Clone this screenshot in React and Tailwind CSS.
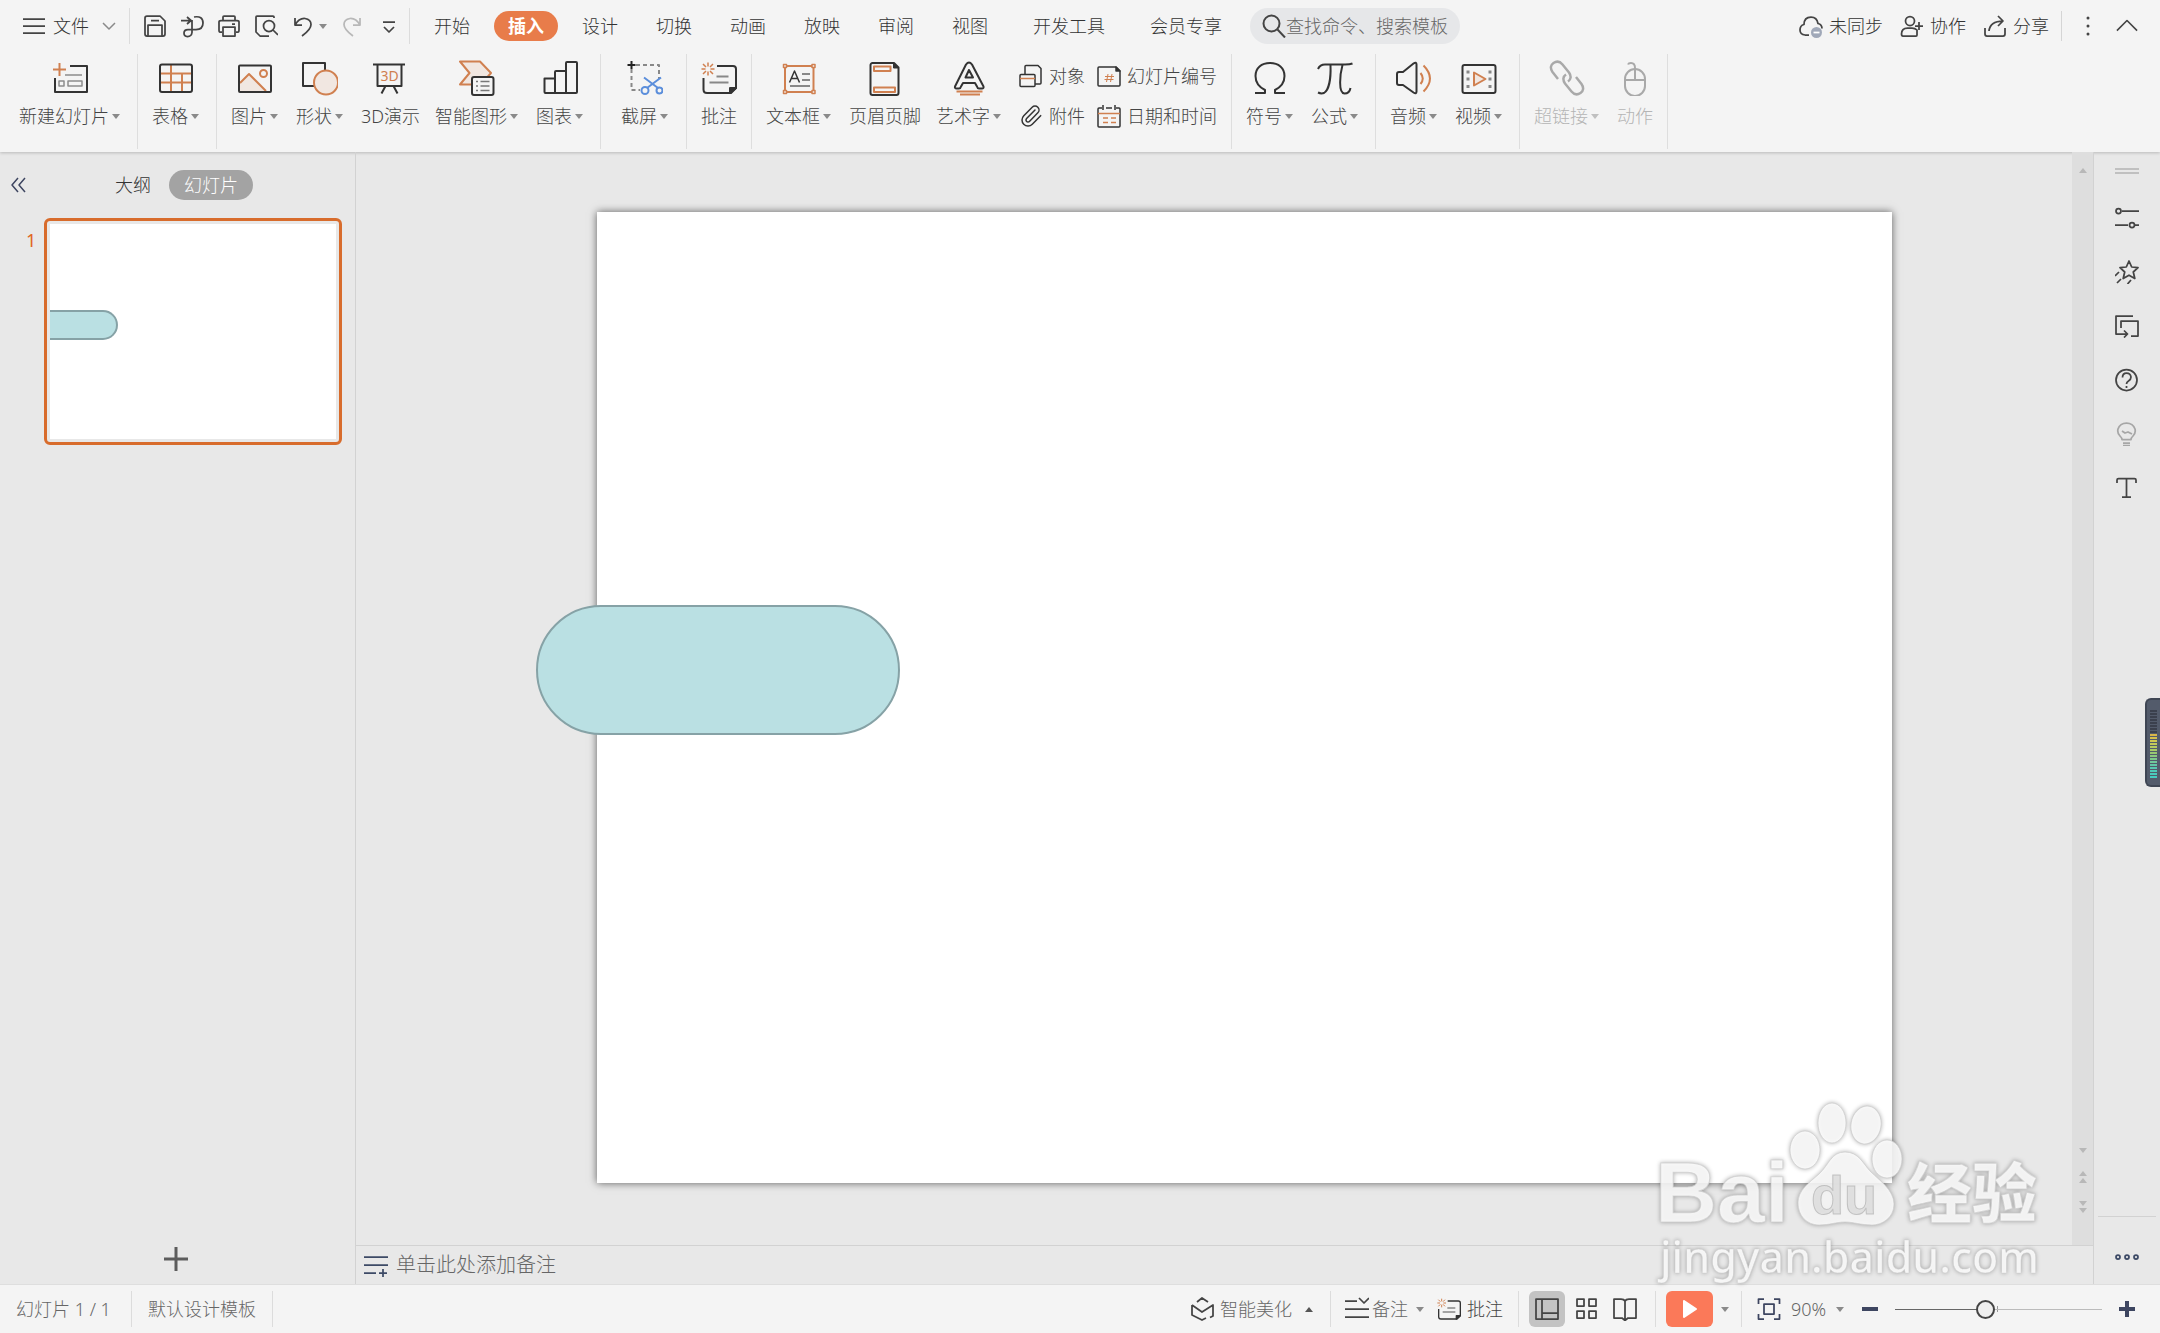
import { useState } from 'react'
import { Paperclip } from 'lucide-react'

const ORANGE = '#d08050'
const INK = '#333333'
const PALE = '#f1e7e1'

function Icon({ box = 24, className = 'w-6 h-6', stroke = '#444444', sw = 1.75, children }) {
  return (
    <svg
      viewBox={`0 0 ${box} ${box}`}
      className={`block flex-shrink-0 ${className}`}
      fill="none"
      stroke={stroke}
      strokeWidth={sw}
      strokeLinejoin="round"
      aria-hidden="true"
    >
      {children}
    </svg>
  )
}

function Caret({ up = false, color = '#8a8a8a' }) {
  return (
    <svg viewBox="0 0 8 5" className="block w-2 h-[5px] flex-shrink-0" aria-hidden="true">
      <path d={up ? 'M0 5h8L4 0z' : 'M0 0h8L4 5z'} fill={color} />
    </svg>
  )
}

// Ribbon icons are drawn on a 36 x 36 grid
const big = {
  newSlide: (
    <>
      <path d="M18 6h17v26H3V18" stroke={INK} />
      <path d="M7.500 3v13M1 9.500h13" stroke={ORANGE} />
      <path d="M13 15h17M7 21h5v5H7zM16 21h14v5H16z" stroke="#8c8c8c" strokeWidth="1.500" />
    </>
  ),
  table: (
    <>
      <path d="M2 13.500h32M2 22.500h32M13 5v27M24 13.500V32" stroke={ORANGE} />
      <rect x="2" y="4.500" width="32" height="27.500" rx="2" stroke={INK} />
    </>
  ),
  picture: (
    <>
      <path d="M3 23l9-9 17 17H3z" fill={PALE} stroke="none" />
      <path d="M3 23l9-9 17 17" stroke={ORANGE} />
      <circle cx="26.500" cy="13.500" r="3.500" stroke={ORANGE} />
      <rect x="2" y="5.500" width="32" height="26.500" rx="1" stroke={INK} />
    </>
  ),
  shape: (
    <>
      <path d="M12 26H1V3h22v8" stroke={INK} />
      <circle cx="24" cy="22.500" r="12" fill={PALE} stroke={ORANGE} />
    </>
  ),
  demo3d: (
    <>
      <path d="M0 4.500h32M4.500 5v21h24V5M12.500 26l-4 7.500M20.500 26l4 7.500" stroke={INK} />
      <text x="16.500" y="20.500" textAnchor="middle" fontSize="14" fontWeight="400" fontFamily="Noto Sans, sans-serif" fill={ORANGE} stroke="none">3D</text>
    </>
  ),
  smart: (
    <>
      <path d="M1 1.500h20l11 11.500-10 11.500H1L10.500 13z" fill={PALE} stroke={ORANGE} />
      <rect x="13" y="17" width="21.500" height="18" rx="2" fill="#f4f4f4" stroke={INK} />
      <path d="M17 21.500h2M17 26h2M17 30.500h2M21.500 21.500h9M21.500 26h9M21.500 30.500h9" stroke="#777" strokeWidth="1.500" />
    </>
  ),
  chart: (
    <path d="M2.500 18.500H13V33H3.500a1 1 0 0 1-1-1zM13 33V12a1 1 0 0 1 1-1h10v22zM24 33V3a1 1 0 0 1 1-1h9a1 1 0 0 1 1 1v29a1 1 0 0 1-1 1z" stroke={INK} />
  ),
  screenshot: (
    <>
      <path d="M9 5h23v14M4.500 9v21H13" stroke="#888" strokeDasharray="4 3" />
      <path d="M4.500 1v8M.5 5h8" stroke="#222" />
      <path d="M34 17.500L20 28M17 17.500L31 28" stroke="#5b8edb" />
      <circle cx="18" cy="30.500" r="3.500" stroke="#5b8edb" />
      <circle cx="32.500" cy="30.500" r="3" stroke="#5b8edb" />
    </>
  ),
  comment: (
    <>
      <path d="M16 6h16q3 0 3 3v19l-5 5H6q-3.500 0-3.500-3.500V18" stroke={INK} />
      <path d="M29 33v-5h6z" fill={INK} stroke={INK} />
      <path d="M15.500 16.500h12M8.500 22.500h19" stroke="#888" />
      <path d="M7 2.500v4M7 11.500v4M.5 9h4M9.500 9h4M2 4l3 3M9 11l3 3M12 4L9 7M5 11l-3 3" stroke={ORANGE} strokeWidth="1.500" />
    </>
  ),
  textbox: (
    <>
      <rect x="4" y="6" width="28.500" height="26" stroke={ORANGE} />
      <path d="M2.500 4.500h3v3h-3zM31 4.500h3v3h-3zM2.500 30.500h3v3h-3zM31 30.500h3v3h-3z" fill="#f4f4f4" stroke={ORANGE} strokeWidth="1.500" />
      <path d="M8.500 22.500L13.500 11l5 11.500M10 18.500h7" stroke={INK} strokeWidth="1.500" />
      <path d="M21 14h8M21 20h8M9 26h20" stroke="#888" />
    </>
  ),
  header: (
    <>
      <path d="M5.500 3H27l4.500 4.500V33a2 2 0 0 1-2 2h-24a2 2 0 0 1-2-2V5a2 2 0 0 1 2-2z" stroke={INK} />
      <path d="M26.500 3v5h5z" fill={INK} stroke={INK} strokeWidth="1" />
      <path d="M7 6.500h16.500v4.500H7zM7 27.500h21V32H7z" stroke={ORANGE} />
    </>
  ),
  wordart: (
    <>
      <path d="M4 26.500L15 4.500q3-4 6 0L32.500 26.500q.5 2-1.500 2h-3q-1.500 0-2-2l-2-3.500H12l-2 3.500q-.5 2-2 2H5.500q-2 0-1.500-2zM14.500 17.500h7.500L18 10z" stroke={INK} />
      <path d="M5.500 31.500h26M9 34.500h20" stroke={ORANGE} />
    </>
  ),
  omega: (
    <path d="M3 33h10v-3C7 27 3.500 22 3.500 16 3.500 8 9.500 3 18 3s14.500 5 14.500 13c0 6-3.500 11-9.500 14v3h10" stroke={INK} />
  ),
  pi: (
    <path d="M1 9q2-4.500 7-4.500h20q5 0 7.500-1M13.500 5C14 18 12 30 7 33q-3 1-6-.5M25.500 5C23 14 21 33 27.500 33.500q5 0 6-5.500" stroke={INK} />
  ),
  audio: (
    <>
      <path d="M1 14q0-2 2-2h4L17.500 3.500q3-2 3 1v27q0 3-3 1L7 25H3q-2 0-2-2z" stroke={INK} />
      <path d="M24.500 13q4.500 5.500 0 11M27.500 5.500q13 13 0 26" stroke={ORANGE} />
    </>
  ),
  video: (
    <>
      <rect x="1.500" y="5" width="33" height="28" rx="2" stroke={INK} />
      <path d="M13 12.500v13L24.500 19z" fill={PALE} stroke={ORANGE} />
      <path d="M7 10.500v3M7 17.500v3M7 25v3M29 10.500v3M29 17.500v3M29 25v3" stroke="#888" strokeWidth="3" />
    </>
  ),
  link: (
    <g strokeWidth="2.500">
      <path d="M9 19L3.500 12C1 8.500 1.500 5 4.500 3s6.500-1.500 9 1.500l6.500 8c2.500 3.500 2 7-1 9" stroke="#a9a9a9" />
      <path d="M27 17l5.500 7c2.500 3.500 2 7-1 9s-6.500 1.500-9-1.500l-6.500-8c-2.500-3.500-2-7 1-9" stroke="#a9a9a9" />
    </g>
  ),
  mouse: (
    <>
      <rect x="8" y="9" width="20" height="27" rx="10" stroke="#a9a9a9" />
      <path d="M8 20h20M18 20V8q0-5-4-5-2.500 0-3 1.500" stroke="#a9a9a9" />
    </>
  ),
}

const groups = [
  { pad: 'pl-3 pr-[7px]', items: [{ icon: 'newSlide', label: '新建幻灯片', menu: true }] },
  { items: [{ icon: 'table', label: '表格', menu: true }] },
  {
    items: [
      { icon: 'picture', label: '图片', menu: true },
      { icon: 'shape', label: '形状', menu: true },
      { icon: 'demo3d', label: '3D演示' },
      { icon: 'smart', label: '智能图形', menu: true },
      { icon: 'chart', label: '图表', menu: true },
    ],
  },
  { pad: 'pl-[13px] pr-2', items: [{ icon: 'screenshot', label: '截屏', menu: true }] },
  { items: [{ icon: 'comment', label: '批注' }] },
  {
    items: [
      { icon: 'textbox', label: '文本框', menu: true },
      { icon: 'header', label: '页眉页脚' },
      { icon: 'wordart', label: '艺术字', menu: true },
    ],
    small: true,
  },
  {
    items: [
      { icon: 'omega', label: '符号', menu: true },
      { icon: 'pi', label: '公式', menu: true },
    ],
  },
  {
    items: [
      { icon: 'audio', label: '音频', menu: true },
      { icon: 'video', label: '视频', menu: true },
    ],
  },
  {
    items: [
      { icon: 'link', label: '超链接', menu: true, disabled: true },
      { icon: 'mouse', label: '动作', disabled: true },
    ],
  },
]

const smallItems = [
  {
    label: '对象',
    icon: (
      <Icon stroke={INK} sw={1.5}>
        <path d="M6 10V2.500q0-1 1-1h12l3 3V19q0 1-1 1h-5" />
        <rect x="1" y="10.500" width="15" height="12" rx="1" />
        <path d="M1 14.500h15" stroke={ORANGE} />
      </Icon>
    ),
  },
  {
    label: '幻灯片编号',
    icon: (
      <Icon stroke={INK} sw={1.5}>
        <path d="M2 3h17l4 4v14q0 1-1 1H2q-1 0-1-1V4q0-1 1-1z" />
        <path d="M19 3v4h4z" fill={INK} />
        <path d="M11 10l-1.500 8M15 10l-1.500 8M8 12.500h9M7.500 15.500h9" stroke={ORANGE} strokeWidth="1" />
      </Icon>
    ),
  },
  {
    label: '附件',
    icon: <Paperclip size={24} strokeWidth={1.5} color={INK} aria-hidden="true" />,
  },
  {
    label: '日期和时间',
    icon: (
      <Icon stroke={INK} sw={1.5}>
        <path d="M5 4H2q-1 0-1 1v17q0 1 1 1h20q1 0 1-1V5q0-1-1-1h-3M9 4h6M6 1v5M18 1v5" />
        <path d="M1 9.500h22M6 14h5M14 14h5M6 18.500h5M14 18.500h5" stroke={ORANGE} />
      </Icon>
    ),
  },
]

const quick = [
  {
    label: '保存',
    icon: (
      <>
        <path d="M4 2h13l5 5v13q0 2-2 2H4q-2 0-2-2V4q0-2 2-2z" />
        <path d="M5 22V11h14v11M8 6.500h8" />
      </>
    ),
  },
  {
    label: '输出为PDF',
    icon: <path d="M1 6.500h10M7 3l4 3.500L7 10M14 3q9-1.500 9 6 0 6.500-7 6.500H8q-4 0-4 3.500t3.500 3.500q4 0 4.500-4V6" />,
  },
  {
    label: '打印',
    icon: (
      <>
        <path d="M6 7V3q0-1 1-1h10q1 0 1 1v4M5 18H3q-1 0-1-2V8q0-1.500 2-1.500h16q2 0 2 1.500v8q0 2-1 2h-2M15 10h3" />
        <path d="M6 13h12v9H6z" />
      </>
    ),
  },
  {
    label: '打印预览',
    icon: (
      <>
        <path d="M20 4V3q0-1-1-1H3q-1 0-1 1v15l4 4h9" />
        <circle cx="15" cy="12" r="5.500" />
        <path d="M19 16l5 5" />
      </>
    ),
  },
]

const sideIcons = [
  {
    label: '属性',
    icon: (
      <>
        <circle cx="3.500" cy="5" r="2.500" />
        <path d="M7 5h17M0 19h13M20 19h4" />
        <circle cx="17" cy="19" r="2.500" />
      </>
    ),
  },
  {
    label: '动画',
    icon: (
      <>
        <path d="M14 1l2.700 6 6.300.6-4.700 4.400 1.500 6.500-5.800-3.300-5.800 3.300 1.500-6.500L5 7.600l6.300-.6z" />
        <path d="M4 12l-4 4M6 19l-4 4M16 20l-3.500 4" />
      </>
    ),
  },
  {
    label: '切换',
    icon: <path d="M18 2H1v18h11M9 16.500l3.500 3.500L9 23.500M6 14V7h17v15h-7" />,
  },
  {
    label: '帮助',
    icon: (
      <>
        <circle cx="11.500" cy="12" r="10.500" />
        <path d="M7.500 9.500q0-4.500 4-4.500t4.500 4q0 2.500-2.500 4-2 1.300-2 3M11.500 18v2" />
      </>
    ),
  },
  {
    label: '提示',
    color: '#a6a6a6',
    icon: (
      <>
        <path d="M7 17.500q0-1.500-2-3.500-3-3-2-7Q5 1 11.500 1T20 7q1 4-2 7-2 2-2 3.500zM8 21h7M8 23.500h7" />
        <path d="M7 9l3 2 3-1 4 2" />
      </>
    ),
  },
  {
    label: '文字',
    icon: <path d="M2 7V4q0-1.500 1.500-1.500h16Q21 2.500 21 4v3M11.500 3v18M7 21h9" />,
  },
]

const tabs = ['开始', '插入', '设计', '切换', '动画', '放映', '审阅', '视图', '开发工具', '会员专享']

function TopBar() {
  const [active, setActive] = useState('插入')
  return (
    <div className="flex items-center h-[52px] pl-[22px] pr-[22px] text-[#333]">
      <button className="flex items-center">
        <Icon><path d="M1 5h22M1 12h22M1 19h22" /></Icon>
        <span className="ml-[7px]">文件</span>
        <Icon className="w-[14px] h-[14px] ml-[13px]" box={14} stroke="#8a8a8a" sw={1.5}><path d="M1 4l6 6 6-6" /></Icon>
      </button>
      <div className="w-px h-9 ml-[13px] mr-[13px] bg-[#dcdcdc]" />

      <div className="flex items-center gap-[13px]">
        {quick.map((q) => (
          <button key={q.label} aria-label={q.label}><Icon>{q.icon}</Icon></button>
        ))}
        <button aria-label="撤销" className="flex items-center gap-1">
          <Icon><path d="M4 4v7h7M4 11Q8 4 14 4.500q6 1 6 6T11 22" /></Icon>
          <Caret />
        </button>
        <button aria-label="恢复" disabled>
          <Icon stroke="#b8b8b8"><path d="M20 4v7h-7M20 11Q16 4 10 4.500q-6 1-6 6T13 22" /></Icon>
        </button>
        <button aria-label="自定义快速访问工具栏">
          <Icon><path d="M6 8h12M7 13l5 5 5-5" /></Icon>
        </button>
      </div>
      <div className="w-px h-9 ml-2 mr-[10px] bg-[#dcdcdc]" />

      <nav className="flex items-center gap-[10px]">
        {tabs.map((t) => (
          <button
            key={t}
            onClick={() => setActive(t)}
            className={`h-[30px] px-[14px] rounded-full ${t.length > 2 ? 'ml-[7px]' : ''} ${
              t === active ? 'bg-[#e87c4a] text-white font-bold' : ''
            }`}
          >
            {t}
          </button>
        ))}
      </nav>

      <label className="flex items-center h-9 w-[210px] ml-[14px] pl-3 rounded-full bg-[#e6e7e9]">
        <Icon stroke="#444" sw={2}><circle cx="9.500" cy="9.500" r="8" /><path d="M15.500 15.500l7.500 8" /></Icon>
        <input
          aria-label="搜索"
          placeholder="查找命令、搜索模板"
          className="w-[166px] bg-transparent outline-none placeholder:text-[#666]"
        />
      </label>

      <div className="flex items-center ml-auto gap-[17px]">
        <button className="flex items-center gap-[6px]">
          <Icon>
            <path d="M10 21H6q-5-.5-5-5t4-5.500Q5 3 12 3q6 0 7 6.500 4 1 4 5" />
            <circle cx="17.500" cy="18.500" r="5.500" fill="#a0a8b8" stroke="none" />
            <path d="M14.500 18.500h6" stroke="#fff" />
          </Icon>
          未同步
        </button>
        <button className="flex items-center gap-[6px]">
          <Icon>
            <circle cx="10" cy="7" r="4.500" />
            <path d="M16 22H3q-1.500 0-1.500-2 0-6 6-6H12q3 0 5 2v5q0 1-1 1M19 8v8M15 12h8" />
          </Icon>
          协作
        </button>
        <button className="flex items-center gap-[6px]">
          <Icon><path d="M2 14v6q0 2 2 2h16q2 0 2-2v-6M6 17Q7 7 20 7M15 2l5 5-5 5" /></Icon>
          分享
        </button>
      </div>
      <div className="w-px h-[30px] ml-3 mr-[14px] bg-[#d5d5d5]" />
      <button aria-label="更多">
        <Icon><g fill="#444" stroke="none"><circle cx="12" cy="4" r="1.500" /><circle cx="12" cy="12" r="1.500" /><circle cx="12" cy="20" r="1.500" /></g></Icon>
      </button>
      <button aria-label="收起功能区" className="ml-4">
        <Icon className="w-[22px] h-6"><path d="M1 17L12 6l11 11" /></Icon>
      </button>
    </div>
  )
}

function Ribbon() {
  return (
    <div className="flex h-[100px] pt-[2px]">
      {groups.map((g, i) => (
        <div key={i} className={`flex items-start gap-px h-[95px] border-r border-[#dedede] ${g.pad || 'px-[7px]'}`}>
          {g.items.map((it) => (
            <button
              key={it.label}
              disabled={it.disabled}
              className={`flex flex-col items-center gap-2 pt-[6px] pl-[7px] ${it.menu ? 'pr-[10px]' : 'pr-[7px]'} ${
                it.disabled ? 'text-[#b5b5b5]' : 'text-[#444]'
              }`}
            >
              <Icon box={36} className="w-9 h-9" sw={2}>{big[it.icon]}</Icon>
              <span className="flex items-center gap-[3px] whitespace-nowrap">
                {it.label}
                {it.menu && <Caret color={it.disabled ? '#c0c0c0' : undefined} />}
              </span>
            </button>
          ))}
          {g.small && (
            <div className="grid grid-cols-[auto_auto] gap-x-3 gap-y-4 pt-[10px] px-[7px] text-[#444]">
              {smallItems.map((s) => (
                <button key={s.label} className="flex items-center gap-[6px] whitespace-nowrap">
                  {s.icon}
                  {s.label}
                </button>
              ))}
            </div>
          )}
        </div>
      ))}
    </div>
  )
}

function SlidePanel() {
  return (
    <aside className="flex flex-col flex-shrink-0 w-[356px] border-r border-[#d2d2d2]">
      <div className="flex items-center h-[30px] mt-[18px] pl-[10px] text-[#333]">
        <button aria-label="折叠">
          <Icon className="w-4 h-4" box={16} stroke="#3d4560" sw={1.5}><path d="M8 1L2 8l6 7M15 1L9 8l6 7" /></Icon>
        </button>
        <button className="ml-[89px]">大纲</button>
        <button className="h-[30px] px-[15px] ml-[18px] rounded-full bg-[#a3a3a3] text-white">幻灯片</button>
      </div>
      <div className="flex mt-[18px]">
        <span className="w-11 pl-[26px] pt-[10px] leading-6 font-normal text-[#e0661f]">1</span>
        <button aria-label="幻灯片 1" className="w-[298px] h-[227px] p-[3px] border-[3px] border-[#d86c2c] rounded-md">
          <span className="flex items-center w-full h-full bg-white">
            <span className="block w-[68px] h-[30px] mb-[14px] rounded-r-full bg-[#bae0e3] border-2 border-l-0 border-[#86a2a6]" />
          </span>
        </button>
      </div>
      <button aria-label="新建幻灯片" className="self-center mt-auto mb-3 mr-1">
        <Icon className="w-[26px] h-[26px]" box={26} stroke="#5c5c5c" sw={3}><path d="M13 1v24M1 13h24" /></Icon>
      </button>
    </aside>
  )
}

function ScrollBar() {
  const gray = '#b8b8b8'
  return (
    <div className="flex flex-col items-center w-[22px] border-r border-[#d2d2d2] bg-[#dedede]">
      <div className="mt-4"><Caret up color={gray} /></div>
      <div className="flex flex-col gap-[2px] mt-auto pb-8">
        <Caret color={gray} />
        <span className="h-[14px]" />
        <Caret up color={gray} />
        <Caret up color={gray} />
        <span className="h-[14px]" />
        <Caret color={gray} />
        <Caret color={gray} />
      </div>
    </div>
  )
}

function Workspace() {
  return (
    <div className="flex flex-col flex-1 min-w-0">
      <div className="flex flex-1">
        <main className="flex flex-1 justify-center items-start pt-[60px] pl-[61px]">
          <div className="relative w-[1295px] aspect-[4/3] bg-white shadow-[0_0_8px_rgba(0,0,0,0.6)]">
            <div className="absolute left-[-61px] top-[393px] w-[364px] h-[130px] rounded-full bg-[#bae0e3] border-2 border-[#86a2a6]" />
          </div>
        </main>
        <ScrollBar />
      </div>
      <label className="flex items-center h-[39px] pl-2 gap-2 border-t border-r border-[#d2d2d2]">
        <Icon stroke="#3d4a66"><path d="M0 4h24M0 12h24M0 20h12M15 20h8M19 16v8" /></Icon>
        <input
          aria-label="备注"
          placeholder="单击此处添加备注"
          className="flex-1 bg-transparent outline-none text-[20px] placeholder:text-[#666]"
        />
      </label>
    </div>
  )
}

function SideBar() {
  return (
    <aside className="flex flex-col items-center flex-shrink-0 w-[66px] pt-4">
      <div className="w-6 h-[6px] border-y-2 border-[#c0c0c0]" />
      <div className="flex flex-col gap-[30px] mt-8">
        {sideIcons.map((s) => (
          <button key={s.label} aria-label={s.label}>
            <Icon stroke={s.color || '#444444'}>{s.icon}</Icon>
          </button>
        ))}
      </div>
      <div className="w-[58px] h-px mt-auto bg-[#d2d2d2]" />
      <button aria-label="更多" className="mt-7 mb-[15px]">
        <Icon stroke="#3d4a66"><circle cx="3" cy="12" r="2" /><circle cx="12" cy="12" r="2" /><circle cx="21" cy="12" r="2" /></Icon>
      </button>
    </aside>
  )
}

const meter = [
  '#3b404d', '#3b404d', '#3b404d', '#3b404d', '#3b404d', '#3b404d', '#3b404d', '#3b404d',
  '#d9b64a', '#d5bf4c', '#cfc752', '#c3c95a', '#b6ca60', '#a8ca68', '#98c972', '#8bc97e',
  '#7dc98c', '#70c99a', '#62c9a6', '#58c9b0', '#50c9b8', '#4acbbc', '#46ccc0',
]

// Level meter docked to the window edge
function Meter() {
  return (
    <div className="absolute right-0 top-[698px] flex flex-col items-center w-[15px] h-[89px] pt-[10px] gap-px rounded-l-md bg-[#535b6b] border-2 border-r-0 border-[#3f4654]">
      {meter.map((c, i) => (
        <span key={i} className="block w-[7px] h-[2px]" style={{ backgroundColor: c }} />
      ))}
    </div>
  )
}

function Divider() {
  return <div className="w-px h-9 bg-[#dcdcdc]" />
}

function StatusBar() {
  const [zoom, setZoom] = useState(43)
  return (
    <footer className="flex items-center h-[49px] border-t border-[#dedede] bg-[#f4f4f4] text-[#666]">
      <span className="w-[131px] pl-4">幻灯片 1 / 1</span>
      <Divider />
      <span className="w-[140px] pl-4 whitespace-nowrap">默认设计模板</span>
      <Divider />

      <div className="flex items-center ml-auto">
        <button className="flex items-center mr-[17px]">
          <Icon className="w-6 h-6 mr-[5px]" stroke="#444">
            <path d="M1 8v10l10 5 4-2M1 8l10 7 11-7v11l-3 1.500M6 5l5-4 6 4" />
          </Icon>
          智能美化
          <span className="ml-[13px]"><Caret up color="#555" /></span>
        </button>
        <Divider />
        <button className="flex items-center ml-[14px] mr-[13px]">
          <Icon className="w-6 h-6 mr-[3px]" stroke="#444"><path d="M0 4h12M0 12h24M0 20h24M14 1l5 5 5-5" /></Icon>
          备注
          <span className="ml-2"><Caret /></span>
        </button>
        <button className="flex items-center gap-[6px] mr-[15px] text-[#444]">
          <Icon box={36} sw={2}>{big.comment}</Icon>
          批注
        </button>
        <Divider />
        <button aria-label="普通视图" className="ml-[10px] p-[6px] rounded-md bg-[#c3c3c3]">
          <Icon><path d="M1 2h22v20H1zM7 2v20M7 16h16" /></Icon>
        </button>
        <button aria-label="幻灯片浏览" className="ml-[10px]">
          <Icon><path d="M2 2h7v7H2zM14 2h7v7h-7zM2 14h7v7H2zM14 14h7v7h-7z" /></Icon>
        </button>
        <button aria-label="阅读视图" className="ml-[14px] mr-[18px]">
          <Icon><path d="M12 4q-1-2-4-2H1v19h8l3 2.500 3-2.500h8V2h-7q-3 0-4 2zM12 4v18" /></Icon>
        </button>
        <Divider />
        <button aria-label="放映" className="flex items-center justify-center w-[47px] h-9 ml-[10px] rounded-md bg-[#fb7959]">
          <svg viewBox="0 0 14 18" className="w-[14px] h-[18px]" aria-hidden="true">
            <path d="M1 1v16L13 9z" fill="#fff" stroke="#fff" strokeWidth="2" strokeLinejoin="round" />
          </svg>
        </button>
        <button aria-label="放映选项" className="ml-2 mr-3"><Caret /></button>
        <Divider />
        <button aria-label="适应窗口" className="ml-[15px]">
          <Icon stroke="#3d4560"><path d="M1.500 7V2H7M17 2h5.500v5M22.500 17v5H17M7 22H1.500v-5M7 7h10v10H7z" /></Icon>
        </button>
        <label className="flex items-center ml-[10px]">
          <select aria-label="缩放比例" className="w-[45px] appearance-none bg-transparent outline-none">
            <option>90%</option>
          </select>
          <Caret />
        </label>
        <button aria-label="缩小" className="ml-[18px]">
          <Icon className="w-4 h-4" box={16} stroke="#3d4560" sw={4}><path d="M0 8h16" /></Icon>
        </button>
        <div className="relative flex items-center mx-[17px]">
          <span className="absolute left-[102px] w-px h-[6px] bg-[#999]" />
          <input
            type="range"
            aria-label="缩放"
            value={zoom}
            onChange={(e) => setZoom(Number(e.target.value))}
            className="relative w-[207px] h-5 appearance-none bg-transparent [&::-webkit-slider-runnable-track]:h-px [&::-webkit-slider-runnable-track]:bg-linear-to-r [&::-webkit-slider-runnable-track]:from-[#666] [&::-webkit-slider-runnable-track]:from-45% [&::-webkit-slider-runnable-track]:to-[#bbb] [&::-webkit-slider-runnable-track]:to-45% [&::-webkit-slider-thumb]:appearance-none [&::-webkit-slider-thumb]:w-[19px] [&::-webkit-slider-thumb]:h-[19px] [&::-webkit-slider-thumb]:mt-[-9px] [&::-webkit-slider-thumb]:rounded-full [&::-webkit-slider-thumb]:border-2 [&::-webkit-slider-thumb]:border-[#444] [&::-webkit-slider-thumb]:bg-[#eee]"
          />
        </div>
        <button aria-label="放大" className="mr-[25px]">
          <Icon className="w-4 h-4" box={16} stroke="#3d4560" sw={4}><path d="M0 8h16M8 0v16" /></Icon>
        </button>
      </div>
    </footer>
  )
}

function Watermark() {
  return (
    <svg
      viewBox="0 0 392 190"
      className="absolute right-[113px] bottom-[43px] w-[392px] h-[190px] pointer-events-none drop-shadow-[0_0_2px_rgba(0,0,0,0.35)]"
      fill="#ffffff"
      fillOpacity="0.85"
      stroke="#cccccc"
      strokeOpacity="0.7"
      strokeWidth="1"
    >
      <text x="0" y="122" fontSize="86" fontWeight="700" fontFamily="Liberation Sans, sans-serif">Bai</text>
      <ellipse cx="150" cy="50" rx="15" ry="19" />
      <ellipse cx="177" cy="23" rx="14" ry="20" />
      <ellipse cx="211" cy="25" rx="15" ry="19" transform="rotate(10 211 25)" />
      <ellipse cx="232" cy="59" rx="15" ry="19" />
      <path d="M190 52c14 0 18 12 26 20s23 18 23 32-12 21-22 21c-12 0-18-3-27-3s-15 3-26 3c-12 0-21-9-21-22s11-20 21-29 12-22 26-22z" />
      <text x="189" y="114" textAnchor="middle" fontSize="54" fontWeight="700" fontFamily="Liberation Sans, sans-serif" fill="#dcdcdc" stroke="#b0b0b0">du</text>
      <text x="252" y="117" fontSize="65" fontWeight="900" fontFamily="Noto Sans CJK SC, sans-serif">经验</text>
      <text x="5" y="173" fontSize="43" fontWeight="500" fontFamily="Noto Sans, sans-serif" strokeWidth="0.500">jingyan.baidu.com</text>
    </svg>
  )
}

export default function App() {
  return (
    <div className="relative flex flex-col min-h-screen bg-[#e8e8e8] text-[18px] leading-6 font-light font-['Noto_Sans','Noto_Sans_CJK_SC',sans-serif]">
      <header className="bg-[#f4f4f4] shadow-[0_1px_3px_rgba(0,0,0,0.2)]">
        <TopBar />
        <Ribbon />
      </header>
      <div className="flex flex-1">
        <SlidePanel />
        <Workspace />
        <SideBar />
      </div>
      <StatusBar />
      <Meter />
      <Watermark />
    </div>
  )
}
